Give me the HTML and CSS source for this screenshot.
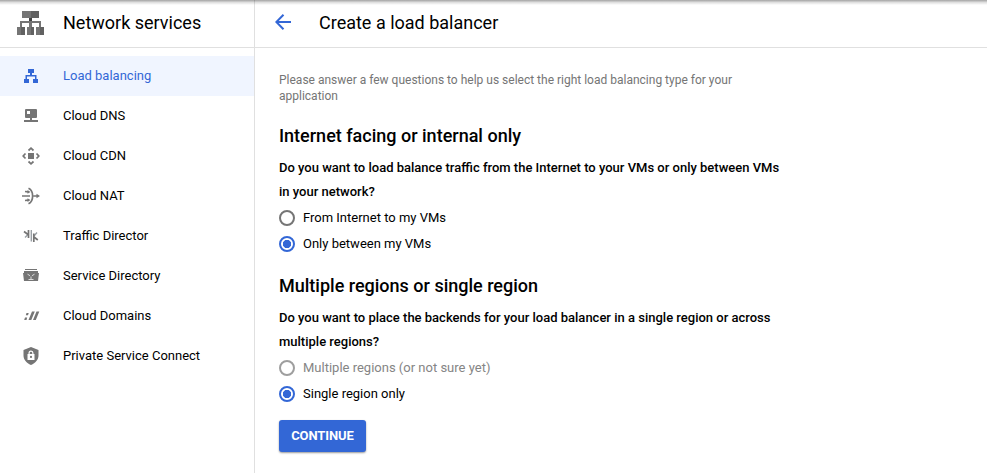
FILE: index.html
```html
<!DOCTYPE html>
<html lang="en">
<head>
<meta charset="utf-8">
<title>Create a load balancer</title>
<link rel="stylesheet" href="styles.css">
</head>
<body>
<div class="app">
  <aside class="sidebar">
    <header class="sidebar-header">
      <svg class="product-icon" viewBox="0 0 27 24" width="27" height="24"><path fill="#757575" d="M5 0h9v7H5zM0 16h4v8H0zM10 16h4v8h-4zM19 16h4v8h-4z"/><path fill="#616161" d="M14 0h8v7h-8zM4 16h4v8H4zM14 16h3v8h-3zM23 16h4v8h-4z"/><path fill="#757575" d="M12 10h3v6h-3zM3 10h21v6h-2v-4H5v4H3z"/><path fill="#424242" d="M12 7h3v3h-3z"/></svg>
      <h1 class="product-name">Network services</h1>
    </header>
    <nav class="nav">
      <a class="nav-item active"><svg class="icon" viewBox="0 0 18 18"><path d="M6 2h6v4h-2v2h4.500v4H16v4h-5v-4h2V9.500H5V12h2v4H2v-4h1.500V8H8V6H6z"/></svg><span>Load balancing</span></a>
      <a class="nav-item"><svg class="icon" viewBox="0 0 18 18"><path fill-rule="evenodd" d="M4 2h10a1 1 0 0 1 1 1v7a1 1 0 0 1-1 1h-4v2h6v2H2v-2h6v-2H4a1 1 0 0 1-1-1V3a1 1 0 0 1 1-1zm1 2v3h3V4z"/></svg><span>Cloud DNS</span></a>
      <a class="nav-item"><svg class="icon" viewBox="0 0 18 18"><path d="M6 6h6v6H6z"/><path class="line" d="M6.500 3.500 9 1.200l2.500 2.300M6.500 14.500 9 16.800l2.500-2.300M3.500 6.500 1.200 9l2.300 2.500M14.500 6.500 16.800 9l-2.300 2.500"/></svg><span>Cloud CDN</span></a>
      <a class="nav-item"><svg class="icon" viewBox="0 0 18 18"><path class="line" d="M6.500 1.200c5.500 2.500 5.500 13 0 15.600M0 9h8M11.500 9H15M3 4.500l3 .3M3 13.500l3-.3"/><path d="m14.500 6.700 3.500 2.300-3.500 2.300zM5.500 3 8.500 5l-3 1.700zM5.500 15l3-2-3-1.700z"/></svg><span>Cloud NAT</span></a>
      <a class="nav-item"><svg class="icon" viewBox="0 0 18 18"><path class="line faded" d="M9.300 3v11.500M3 10.500 6 7.500M15 5.500 12 9"/><path class="line" d="M2 4.500 6 7.500M6.500 3v8M11.800 6.500v8.500M12 10l3.800 3"/></svg><span>Traffic Director</span></a>
      <a class="nav-item"><svg class="icon" viewBox="0 0 18 18"><path d="M3 2h12v1H3zM2 4h14v2H2zM1 6h16l-1 8H2z"/><path class="detail" d="m5.500 7.200 2.500 1.500M12.500 7.200 10 8.700M9 9.500v3M6.500 12.500h5"/></svg><span>Service Directory</span></a>
      <a class="nav-item"><svg class="icon" viewBox="0 0 18 18"><path d="M10 4.500h2.800L9.300 13H6.500zM14.500 4.500h2.800L13.800 13H11zM4.500 6h2.200L6 8.300H3.800zM3 10.500h2.200L4.500 13H2.200z"/></svg><span>Cloud Domains</span></a>
      <a class="nav-item"><svg class="icon" viewBox="0 0 18 18"><path fill-rule="evenodd" d="M9 0 16.500 3v5.500c0 4-3 7.500-7.500 9.500-4.500-2-7.500-5.500-7.500-9.500V3zM6.500 7H5.500v6h7V7h-1V6a2.500 2.500 0 0 0-5 0zm1.200 0V6a1.300 1.300 0 0 1 2.600 0v1zM9 8.800a1.100 1.100 0 1 1 0 2.200 1.100 1.100 0 0 1 0-2.200z"/></svg><span>Private Service Connect</span></a>
    </nav>
  </aside>
  <main class="main">
    <header class="page-header">
      <svg class="back" viewBox="0 0 16 16" width="16" height="16"><path d="M16 8H1.500M8.500.8 1.300 8l7.200 7.200"/></svg>
      <h2 class="page-title">Create a load balancer</h2>
    </header>
    <form class="content">
      <p class="intro">Please answer a few questions to help us select the right load balancing type for your<br>application</p>
      <section class="question">
        <h3>Internet facing or internal only</h3>
        <p class="prompt">Do you want to load balance traffic from the Internet to your VMs or only between VMs<br>in your network?</p>
        <label class="option"><span class="radio"></span>From Internet to my VMs</label>
        <label class="option"><span class="radio checked"></span>Only between my VMs</label>
      </section>
      <section class="question">
        <h3>Multiple regions or single region</h3>
        <p class="prompt">Do you want to place the backends for your load balancer in a single region or across<br>multiple regions?</p>
        <label class="option disabled"><span class="radio"></span>Multiple regions (or not sure yet)</label>
        <label class="option"><span class="radio checked"></span>Single region only</label>
      </section>
      <button class="continue" type="button">CONTINUE</button>
    </form>
  </main>
</div>
</body>
</html>
```

FILE: styles.css
```css
* { box-sizing: border-box; }
body {
  margin: 0;
  background: #fff;
  color: #000;
  font: 13px/20px Roboto, sans-serif;
}
h1, h2, h3, p { margin: 0; font-weight: 400; }
.app {
  position: relative;
  display: flex;
  height: 473px;
  overflow: hidden;
}
/* Shadow cast by the toolbar above the page */
.app::before {
  content: "";
  position: absolute;
  inset: 0 0 auto;
  height: 5px;
  background: linear-gradient(rgba(0, 0, 0, .36), rgba(0, 0, 0, .12) 50%, transparent);
}
.sidebar { width: 255px; flex: none; border-right: 1px solid #e0e0e0; }
.sidebar-header, .page-header {
  display: flex;
  align-items: center;
  height: 48px;
  padding-bottom: 1px;
  border-bottom: 1px solid #e0e0e0;
}
.sidebar-header { padding-left: 17px; }
.product-name, .page-title { font-size: 18px; line-height: 24px; }
.product-name { margin-left: 19px; }
.nav { padding-top: 8px; }
.nav-item {
  display: flex;
  align-items: center;
  height: 40px;
  padding-left: 22px;
}
.nav-item.active { background: #f0f5ff; color: #3367d6; }
.icon { width: 18px; height: 18px; margin-right: 23px; fill: #757575; }
.active .icon { fill: #3367d6; }
.line { fill: none; stroke: #757575; stroke-width: 1.7; }
.faded { stroke: #9aa0a6; stroke-width: 1.4; }
.detail { fill: none; stroke: #ddd; stroke-width: 1; }
.main { flex: 1; }
.page-header { padding-left: 20px; }
.back {
  margin: 0 28px 2px 0;
  fill: none;
  stroke: #3367d6;
  stroke-width: 2;
  flex: none;
}
.content { padding: 24px 24px 0; }
.intro { font-size: 12px; line-height: 16px; color: #757575; }
.question h3 { font-size: 18px; line-height: 24px; font-weight: 500; }
.question { padding-top: 20px; }
.question + .question { padding-top: 17px; }
.prompt { font-weight: 500; line-height: 24px; margin: 8px 0 1px; }
.option { display: flex; align-items: center; height: 26px; }
.option.disabled { color: #858585; }
.radio {
  width: 16px;
  height: 16px;
  margin-right: 8px;
  border: 2px solid #757575;
  border-radius: 50%;
}
.disabled .radio { border-color: #9e9e9e; }
.radio.checked {
  border-color: #3367d6;
  background: radial-gradient(circle, #3367d6 3.8px, transparent 4.500px);
}
.continue {
  display: block;
  width: 87px;
  height: 32px;
  margin-top: 13px;
  padding: 0;
  border: 0;
  border-radius: 3px;
  background: #3367d6;
  color: #fff;
  font: 700 13px/32px Roboto, sans-serif;
  letter-spacing: -.1px;
  box-shadow: 0 1px 2px rgba(0, 0, 0, .4);
}
```
